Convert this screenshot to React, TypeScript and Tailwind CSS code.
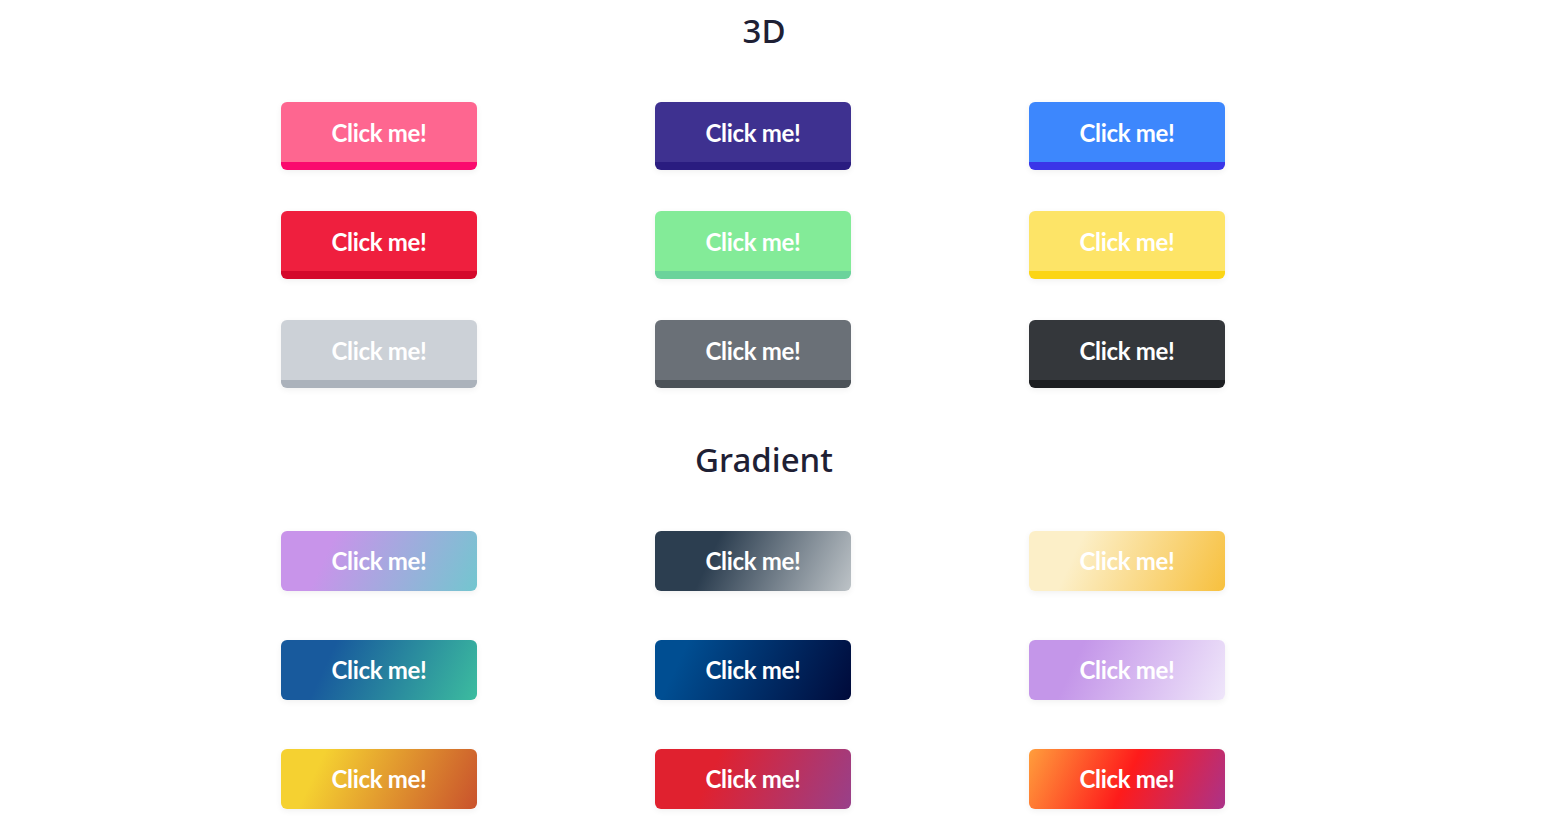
const threeD = [
  "bg-[#fe6690] border-[#fa0a6e]",
  "bg-[#3e3190] border-[#2a1c80]",
  "bg-[#3d87fd] border-[#3a35e8]",
  "bg-[#ef1f3e] border-[#d4082b]",
  "bg-[#83eb98] border-[#6bd39b]",
  "bg-[#fde467] border-[#fbd515]",
  "bg-[#ccd1d7] border-[#abb2bb]",
  "bg-[#6a7077] border-[#4b5157]",
  "bg-[#34373b] border-[#1c1e21]",
]

const gradients = [
  "bg-[linear-gradient(115deg,#c894ea_25%,#73c6cf_100%)]",
  "bg-[linear-gradient(115deg,#2c3e50_30%,#bdc3c7_100%)]",
  "bg-[linear-gradient(115deg,#fcefc8_25%,#f7c03e_100%)]",
  "bg-[linear-gradient(115deg,#185a9d_25%,#3cbc9f_100%)]",
  "bg-[linear-gradient(115deg,#004e92_15%,#000a3a_100%)]",
  "bg-[linear-gradient(115deg,#c496e9_25%,#efe6fa_100%)]",
  "bg-[linear-gradient(115deg,#f5d131_20%,#c9522c_100%)]",
  "bg-[linear-gradient(115deg,#e0212f_30%,#98408a_100%)]",
  "bg-[linear-gradient(115deg,#ff9e3c_0%,#fe1b1b_50%,#ab3289_100%)]",
]

function Heading({ children }: { children: React.ReactNode }) {
  return (
    <h2 className="pr-[18px] text-center text-[33px] leading-none font-medium text-[#1e2034] [font-family:'Noto_Sans',sans-serif]">
      {children}
    </h2>
  )
}

export default function App() {
  return (
    <main className="min-h-screen bg-white pt-[14px] [font-family:'Lato',sans-serif]">
      <Heading>3D</Heading>
      <div className="ml-[192px] mt-[55px] grid w-[1122px] grid-cols-3 gap-y-[41px]">
        {threeD.map((c, i) => (
          <div key={i} className="flex justify-center">
            <button
              className={`flex h-[68px] w-[196px] items-center justify-center rounded-[6px] border-b-[8px] pt-[1px] text-[24px] font-bold tracking-[-0.3px] text-white shadow-[0_2px_6px_rgba(0,0,0,0.06)] ${c}`}
            >
              Click me!
            </button>
          </div>
        ))}
      </div>
      <div className="mt-[55px]">
        <Heading>Gradient</Heading>
      </div>
      <div className="ml-[192px] mt-[55px] grid w-[1122px] grid-cols-3 gap-y-[49px]">
        {gradients.map((c, i) => (
          <div key={i} className="flex justify-center">
            <button
              className={`flex h-[60px] w-[196px] items-center justify-center rounded-[6px] text-[24px] font-bold tracking-[-0.3px] text-white shadow-[0_2px_6px_rgba(0,0,0,0.06)] ${c}`}
            >
              Click me!
            </button>
          </div>
        ))}
      </div>
    </main>
  )
}
